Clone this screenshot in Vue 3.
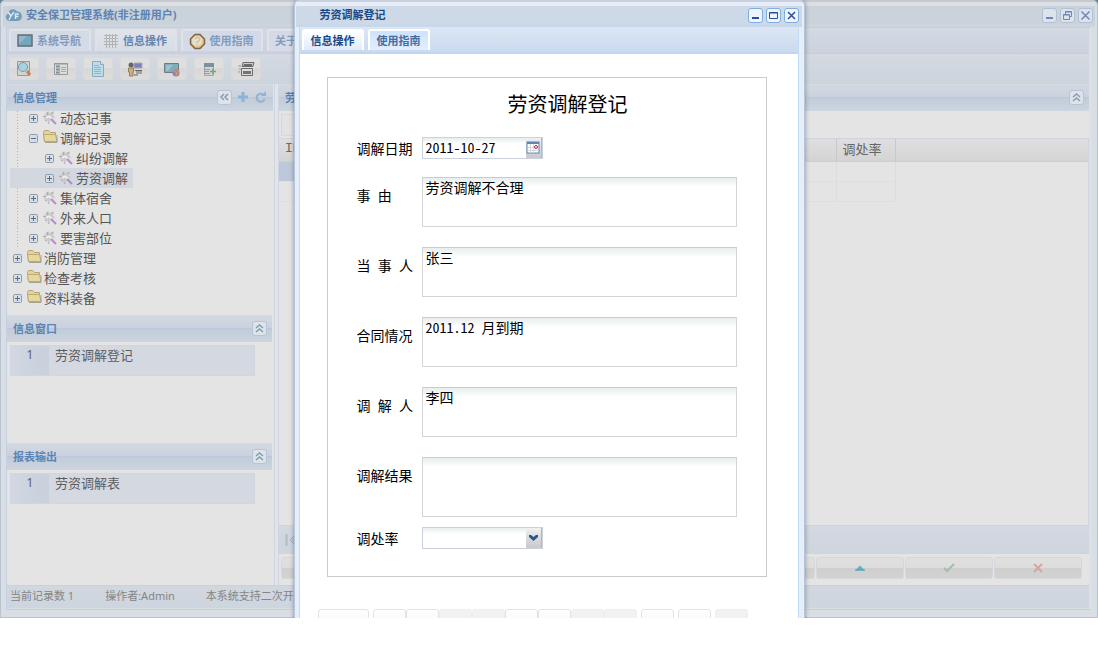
<script setup>
import { ref } from 'vue'

const navTabs = [
  { label: '系统导航', icon: 'screen' },
  { label: '信息操作', icon: 'grid', active: true },
  { label: '使用指南', icon: 'help' },
  { label: '关于' }
]
const tools = ['查找', '列表', '文档', '用户', '网络', '导入', '打印']

const tree = [
  { label: '动态记事', level: 1, leaf: true },
  { label: '调解记录', level: 1, open: true },
  { label: '纠纷调解', level: 2, leaf: true },
  { label: '劳资调解', level: 2, leaf: true, selected: true },
  { label: '集体宿舍', level: 1, leaf: true },
  { label: '外来人口', level: 1, leaf: true },
  { label: '要害部位', level: 1, leaf: true },
  { label: '消防管理', level: 0 },
  { label: '检查考核', level: 0 },
  { label: '资料装备', level: 0 }
]

const lists = [
  { title: '信息窗口', item: '劳资调解登记', cls: 'mid' },
  { title: '报表输出', item: '劳资调解表', cls: 'last' }
]

const date = ref('2011-10-27')
const rate = ref('')
const fields = ref([
  { id: 'reason', label: '事\u00a0\u00a0由', value: '劳资调解不合理' },
  { id: 'party', label: '当\u00a0\u00a0事\u00a0\u00a0人', value: '张三' },
  { id: 'contract', label: '合同情况', value: '2011.12 月到期' },
  { id: 'mediator', label: '调\u00a0\u00a0解\u00a0\u00a0人', value: '李四' },
  { id: 'result', label: '调解结果', value: '', tall: true }
])
const footer = ['wide', 'start', '', 'off', 'off', '', '', 'off', 'off', 'start', 'start', 'start off']
</script>

<template>
  <div class="desktop">
    <main class="app-window">
      <header class="titlebar">
        <svg class="logo" width="17" height="14" viewBox="0 0 17 14" aria-hidden="true">
          <path d="M4 13a4 4 0 0 1-1-7.500A5 5 0 0 1 12 3.500 4.800 4.800 0 0 1 13 13z" fill="#6f9dbb" />
          <path d="M3 4l3 4 3-4M6 8l-2 4M14 6h-3.500v5M10.500 8.500h3" fill="none" stroke="#dde6ec" stroke-width="1.500" />
        </svg>
        <h1>安全保卫管理系统(非注册用户)</h1>
        <div class="win-tools">
          <button type="button" aria-label="最小化"><svg width="13" height="13"><path d="M3 9h7" stroke="#7186b6" stroke-width="2" /></svg></button>
          <button type="button" aria-label="还原"><svg width="13" height="13" fill="none" stroke="#7186b6"><path d="M4.500 5V2.500h6v5H9M4 3h7M2.500 5.500h6v5h-6zM2 6h7" /></svg></button>
          <button type="button" aria-label="关闭"><svg width="13" height="13"><path d="M2.500 2.500l8 8M10.500 2.500l-8 8" stroke="#7186b6" stroke-width="1.500" /></svg></button>
        </div>
      </header>

      <div class="app-inner">
        <nav class="tabs">
          <button v-for="t in navTabs" :key="t.label" type="button" :class="['tab', { active: t.active, plain: !t.icon }]">
            <svg v-if="t.icon === 'screen'" width="16" height="14"><rect x="1" y="1" width="14" height="11" fill="#75a6c0" stroke="#666c72" stroke-width="1.500" /><path d="M2 2h8L2 10z" fill="#8fb8cc" /></svg>
            <svg v-else-if="t.icon === 'grid'" width="16" height="16"><path d="M1 2.500h14M1 5.500h14M1 8.500h14M1 11.500h14M3.500 1v14M6.500 1v14M9.500 1v14M12.500 1v14" stroke="#b3b3b3" stroke-width="1" /></svg>
            <svg v-else-if="t.icon === 'help'" width="17" height="17"><path d="M6 1.500h5L15.500 6v5L11 15.500H6L1.500 11V6z" fill="#e0c68a" stroke="#7c6748" stroke-width="1.500" /><circle cx="8" cy="8" r="5" fill="#e5e0d3" /><path d="M6 6q2-3 4-1t-2 4v1M8 11v1" fill="none" stroke="#d6c096" stroke-width="1.500" /></svg>
            <span>{{ t.label }}</span>
          </button>
        </nav>

        <div class="toolbar">
          <button v-for="(t, i) in tools" :key="t" type="button" :aria-label="t">
            <svg width="18" height="18" viewBox="0 0 18 18" fill="none">
              <template v-if="i === 0"><path d="M2.500 1.500h12v14h-12z" fill="#d2d2d2" stroke="#9a9a9a" /><circle cx="8" cy="7" r="4.500" fill="#a5d3df" stroke="#8698a2" /><path d="M12 11l3 4" stroke="#cb8058" stroke-width="3" /></template>
              <template v-else-if="i === 1"><path d="M2.500 3.500h13v11h-13z" fill="#dddddd" stroke="#999" /><path d="M2 4h14" stroke="#959595" /><path d="M4 6.500h3M4 9.500h3M4 12.500h3" stroke="#78929e" stroke-width="2" /><path d="M7.500 5v9" stroke="#aaa" /><path d="M9 7.500h5M9 9.500h5M9 11.500h5" stroke="#a8a8a8" /></template>
              <template v-else-if="i === 2"><path d="M3.500 1.500h8l3 3v12h-11z" fill="#bcdcea" stroke="#83abc3" /><path d="M11.500 1.500v3h3" fill="#e2ebee" stroke="#83abc3" /><path d="M5 5.500h5M5 7.500h7M5 9.500h7M5 11.500h7M5 13.500h7" stroke="#8db6ce" /></template>
              <template v-else-if="i === 3"><path d="M8 3h8v5H8z" fill="#7f7ec0" stroke="#aaa" /><path d="M10 11h6v3h-6z" fill="#a3a3a3" /><circle cx="5" cy="5" r="2.500" fill="#666" /><path d="M2.500 8h5v4H7v4H3.500v-4h-1z" fill="#cbb27c" stroke="#937f5c" /><path d="M9 10.500h7M8 15h4" stroke="#666" /></template>
              <template v-else-if="i === 4"><path d="M1.500 3.500h14v9h-14z" fill="#82abbc" stroke="#707a80" /><path d="M3 5h7l-5 6H3z" fill="#9bc2cf" /><circle cx="13" cy="13" r="3.500" fill="#9d80ae" /><path d="M11 11l3 2-1 3M14 10l2 2" stroke="#cf9c58" stroke-width="1.500" /></template>
              <template v-else-if="i === 5"><path d="M4.500 3.500h9v12h-9z" fill="#d5d5d5" stroke="#a5a5a5" /><path d="M4 3h10v4H4z" fill="#7b909e" /><path d="M4 9.500h6M4 11.500h5M4 13.500h6" stroke="#999" /><path d="M10 11.500h6M13 8.500v6" stroke="#6fa579" stroke-width="1.500" /></template>
              <template v-else><path d="M6 2.500h11l-1 4H5z" fill="#ccc" stroke="#6c6c6c" /><path d="M7 4h8v3H6z" fill="#6a6a6a" /><path d="M4.500 8.500h11v7h-11z" fill="#dcdcdc" stroke="#6c6c6c" /><path d="M6 11h8v3H6z" fill="#737373" /><path d="M1 6h3M2 9h2M1 12h2" stroke="#999" /></template>
            </svg>
          </button>
        </div>

        <div class="columns">
          <aside class="sidebar">
            <div class="panel-head">
              <h2>信息管理</h2>
              <button type="button" class="box-btn" aria-label="收起"><svg width="13" height="13"><path d="M6 3L3 6l3 3M10 3L7 6l3 3" fill="none" stroke="#7f9eb6" stroke-width="1.500" /></svg></button>
              <button type="button" class="bare-btn" aria-label="添加"><svg width="12" height="12"><path d="M6 1v10M1 6h10" stroke="#90b2d4" stroke-width="3" /></svg></button>
              <button type="button" class="bare-btn" aria-label="刷新"><svg width="12" height="12"><path d="M9 4.500A4 4 0 1 0 9.500 8" fill="none" stroke="#90b2d4" stroke-width="2" /><path d="M6 5h5V0z" fill="#90b2d4" /></svg></button>
            </div>
            <ul class="tree">
              <li v-for="n in tree" :key="n.label" :class="['lv' + n.level, { selected: n.selected }]">
                <svg class="expander" width="9" height="9"><rect x=".5" y=".5" width="8" height="8" rx="1" fill="#d7dde3" stroke="#8b9caf" /><path :d="n.open ? 'M2 4.500h5' : 'M2 4.500h5M4.500 2v5'" stroke="#566c8d" /></svg>
                <svg v-if="n.leaf" width="16" height="16"><path d="M3 4l3-3 2 2 4-2-1 4 2 3-4 1-2 4-2-3-3-1z" fill="#cacaca" /><path d="M1 6l3 1M5 2l1 3M3 10l2 1M10 2l1 2M6 12l1 2" stroke="#a9a9a9" /><path d="M7 6l3 3M4 8l3-2" stroke="#ededed" stroke-width="2" /><path d="M9 9l5 5" stroke="#bb85d6" stroke-width="2" /></svg>
                <svg v-else width="16" height="16"><path d="M1.500 2.500l1-2h4l2 2h5v9h-11z" fill="#e2d398" stroke="#b9a470" /><path d="M2.500 11.500l-1-7h12l1.500 7z" fill="#e5d999" stroke="#bda978" /><path d="M3 12.500h12V5" fill="none" stroke="#a9a397" /></svg>
                <span>{{ n.label }}</span>
              </li>
            </ul>
            <section v-for="l in lists" :key="l.title" :class="['list-panel', l.cls]">
              <div class="panel-head">
                <h2>{{ l.title }}</h2>
                <button type="button" class="box-btn" aria-label="折叠"><svg width="13" height="13"><path d="M3 6l3.500-3L10 6M3 10l3.500-3 3.500 3" fill="none" stroke="#7f9eb6" stroke-width="1.500" /></svg></button>
              </div>
              <div class="list-row"><span class="num">1</span><span class="name">{{ l.item }}</span></div>
            </section>
          </aside>

          <section class="center">
            <div class="panel-head">
              <h2>劳资调解</h2>
              <button type="button" class="box-btn" aria-label="折叠"><svg width="13" height="13"><path d="M3 6l3.500-3L10 6M3 10l3.500-3 3.500 3" fill="none" stroke="#7f9eb6" stroke-width="1.500" /></svg></button>
            </div>
            <div class="filter"><input type="text" aria-label="筛选"></div>
            <div class="grid">
              <table>
                <colgroup><col class="c-mark"><col><col class="c-rate"><col class="c-rest"></colgroup>
                <thead><tr><th>ID</th><th></th><th>调处率</th><th></th></tr></thead>
                <tbody>
                  <tr><td class="hot"></td><td></td><td></td><td class="void"></td></tr>
                  <tr><td></td><td></td><td></td><td class="void"></td></tr>
                </tbody>
              </table>
            </div>
            <div class="pager">
              <button type="button" aria-label="首页"><svg width="12" height="14"><path d="M1.500 1v12" stroke="#b5bac1" stroke-width="2" /><path d="M10 2L5 7l5 5z" fill="#c5cad1" stroke="#adb3bb" /></svg></button>
            </div>
            <div class="actions">
              <button v-for="n in 9" :key="n" type="button" :aria-label="'操作' + n">
                <svg v-if="n === 7" width="12" height="8"><path d="M1 6.500l5-5 5 5z" fill="#5bb6c4" /><path d="M1 6h10" stroke="#5a9da8" /></svg>
                <svg v-else-if="n === 8" width="12" height="10"><path d="M1 5l3 3 7-7" fill="none" stroke="#a1bfaa" stroke-width="2" /></svg>
                <svg v-else-if="n === 9" width="10" height="10"><path d="M1 1l8 8M9 1L1 9" stroke="#d7a5a0" stroke-width="2" /></svg>
              </button>
            </div>
          </section>
        </div>

        <footer class="status"><span>当前记录数 1</span><span>操作者:Admin</span><span>本系统支持二次开发</span></footer>
      </div>
    </main>

    <div class="overlay">
      <section class="dialog" role="dialog" aria-labelledby="dialog-title">
        <header class="titlebar">
          <h1 id="dialog-title">劳资调解登记</h1>
          <div class="win-tools">
            <button type="button" aria-label="最小化"><svg width="13" height="13"><path d="M3 9h7" stroke="#2b4d9c" stroke-width="2" /></svg></button>
            <button type="button" aria-label="最大化"><svg width="13" height="13"><path d="M2.500 3.500h8v6h-8zM2 4h9" fill="none" stroke="#2b4d9c" /></svg></button>
            <button type="button" aria-label="关闭"><svg width="13" height="13"><path d="M3 3l7 7M10 3l-7 7" stroke="#2b4d9c" stroke-width="1.500" /></svg></button>
          </div>
        </header>
        <div class="dialog-body">
          <nav class="tabs">
            <button type="button" class="tab active"><span>信息操作</span></button>
            <button type="button" class="tab"><span>使用指南</span></button>
          </nav>
          <form class="sheet" @submit.prevent>
            <h2>劳资调解登记</h2>
            <div class="row short first">
              <label for="date">调解日期</label>
              <div class="combo">
                <input id="date" v-model="date" type="text">
                <button type="button" class="trigger" aria-label="选择日期"><svg width="14" height="14"><rect x="1" y="1" width="12" height="11" fill="#fff" stroke="#5b87b8" /><path d="M1 2h12" stroke="#5b87b8" stroke-width="2" /><path d="M2 6.500h10M2 9.500h10M4.500 3v9M7.500 3v9" stroke="#d5d9df" /><circle cx="10" cy="6" r="1.500" fill="#fff" stroke="#a8233c" /></svg></button>
              </div>
            </div>
            <div v-for="f in fields" :key="f.id" :class="['row', { tall: f.tall }]">
              <label :for="f.id">{{ f.label }}</label>
              <textarea :id="f.id" v-model="f.value"></textarea>
            </div>
            <div class="row short">
              <label for="rate">调处率</label>
              <div class="combo">
                <select id="rate" v-model="rate"><option value=""></option></select>
                <span class="trigger" aria-hidden="true"><svg width="11" height="8"><path d="M1 1h2l2.500 2L8 1h2v2L5.500 7 1 3z" fill="#2c5494" /></svg></span>
              </div>
            </div>
          </form>
          <div class="dialog-actions">
            <button v-for="(b, i) in footer" :key="i" type="button" :class="b" :aria-label="'按钮' + (i + 1)"></button>
          </div>
        </div>
      </section>
    </div>
  </div>
</template>

<style>
body { margin: 0; background: #fff; overflow: hidden; }
</style>

<style scoped>
* { box-sizing: border-box; }
.desktop {
  position: relative;
  font-family: "Noto Sans", "Noto Sans CJK SC", sans-serif;
  font-size: 11px;
  line-height: 16px;
  color: #666;
  background: #5f7f9c;
}
button { margin: 0; padding: 0; border: 0; background: none; font: inherit; color: inherit; }
h1, h2, ul { margin: 0; padding: 0; font: inherit; }
svg { display: block; flex: none; }

.app-window {
  padding: 0 5px 7px;
  border: 1px solid #b9c2cf;
  border-top: 2px solid #c6cad0;
  border-radius: 5px 5px 0 0;
  background: #d9dde4;
}
.titlebar { display: flex; align-items: center; }
.app-window > .titlebar {
  height: 25px;
  margin: 0 -3px;
  padding: 0 2px;
  border-top: 4px solid #dcdfe4;
  border-bottom: 3px solid #cdd4dd;
  background: #cad2da;
}
.titlebar h1 { flex: 1; font-weight: bold; color: #5b83b3; }
.logo { margin-right: 4px; }
.win-tools { display: flex; gap: 3px; }
.win-tools button {
  width: 15px;
  height: 15px;
  border: 1px solid #b0c0d8;
  border-radius: 3px;
  background: #dee3ea;
}

.app-inner { border: 1px solid #c4cfe1; border-right: 3px solid #dde0e5; background: #e4e4e4; }
.tabs {
  display: flex;
  align-items: flex-end;
  gap: 4px;
  height: 26px;
  padding: 2px 2px 2px;
  background: linear-gradient(#d3d9e1, #cbd2de);
  border-bottom: 1px solid #c3cee2;
}
.tab {
  display: flex;
  align-items: center;
  justify-content: center;
  gap: 4px;
  height: 22px;
  min-width: 82px;
  padding: 0 2px 0 0;
  border: 2px solid #dfe3e9;
  border-bottom: 0;
  border-radius: 3px 3px 0 0;
  background: linear-gradient(#d3dae6, #d5dbe8);
  font-weight: bold;
  color: #829bbd;
}
.tab.active { background: linear-gradient(#e0e3e8, #d7dce6); color: #6486b4; }
.tab.plain { min-width: 64px; justify-content: flex-start; padding-left: 6px; }

.toolbar {
  display: flex;
  gap: 7px;
  height: 30px;
  padding: 3px 2px;
  background: linear-gradient(#d4d9e2, #ccd4dc);
}
.toolbar button {
  display: flex;
  align-items: center;
  justify-content: center;
  width: 30px;
  height: 23px;
  border: 1px solid #dadada;
  border-radius: 3px;
  background: linear-gradient(#dfdfdf 50%, #d7d7d7 50%, #dddddd);
}

.columns { display: flex; gap: 3px; }
.sidebar { flex: 0 0 268px; padding-right: 1px; border-right: 1px solid #cdd4e2; display: flex; flex-direction: column; }
.center { flex: 1; min-width: 0; border-left: 1px solid #cdd4e2; display: flex; flex-direction: column; }
.panel-head {
  display: flex;
  align-items: center;
  gap: 4px;
  height: 27px;
  padding: 0 5px 2px 6px;
  border-top: 1px solid #d5dae5;
  background: linear-gradient(#d2d8e1, #cad2de 12px, #b9c7db 12px, #c2cddb 14px, #cdd5de);
}
.panel-head h2 { flex: 1; padding-top: 2px; font-weight: bold; color: #5b83b3; }
.box-btn { width: 15px; height: 15px; border: 1px solid #b5c5da; border-radius: 3px; background: #dfe3e8; }
.bare-btn { width: 14px; height: 12px; padding-left: 1px; }
.center .panel-head { padding-right: 5px; }

.tree { height: 204px; list-style: none; padding: 0 0 0 3px; }
.tree li {
  display: flex;
  align-items: center;
  width: max-content;
  height: 20px;
  line-height: 20px;
  font-size: 13px;
  color: #555;
}
.tree li:first-child { height: 17px; padding-bottom: 3px; line-height: 14px; }
.tree span { padding: 0 5px 0 2px; }
.tree .expander { margin: 0 4px 0 3px; }
.lv1, .lv2 { background: repeating-linear-gradient(#b3b3b3 0 1px, transparent 1px 3px) 7px 0 / 1px 100% no-repeat; }
.lv1 { padding-left: 16px; }
.lv2 { padding-left: 32px; }
.tree .selected { background: #d3d8e0; }

.list-panel .panel-head { margin-right: 1px; }
.mid { height: 128px; }
.last { height: 142px; }
.list-row {
  display: flex;
  height: 31px;
  margin: 3px 18px 0 3px;
  border: 1px solid #cfd5e2;
  background: #d4d8e0;
  line-height: 18px;
  font-size: 13px;
  color: #5e5e5e;
}
.num { width: 38px; text-align: center; font-size: 12px; background: linear-gradient(90deg, #d2d7e0, #c8d0dd); }
.name { padding-left: 6px; }

.filter { height: 27px; padding: 3px 2px; }
.filter input { display: block; width: 160px; height: 22px; border: 1px solid #d6d8db; background: #e2e2e2; }
.grid { flex: 1; border: 1px solid #cdd3df; border-left: 0; }
.grid table { width: 100%; table-layout: fixed; border-collapse: collapse; font-size: 13px; }
.c-mark { width: 60px; }
.c-rate { width: 59px; }
.c-rest { width: 193px; }
th {
  height: 22px;
  padding: 0 6px 2px;
  border-right: 1px solid #c9c9c9;
  border-bottom: 1px solid #cfcfcf;
  background: linear-gradient(#dfdfdf, #d4d4d4);
  font-weight: normal;
  text-align: left;
  line-height: 20px;
}
th:first-child { border-right: 0; font-family: "Liberation Mono", monospace; }
th:last-child { border-right: 0; }
td { height: 20px; padding: 0; border-right: 1px solid #dcdcdc; border-bottom: 1px solid #dfdfdf; }
td:first-child { border-right: 0; }
td.void { border: 0; }
td.hot { background: #bdc9da; }
.pager { display: flex; align-items: center; height: 28px; padding-left: 6px; background: linear-gradient(#d3d8e1, #cdd5de); }
.actions { display: flex; gap: 1px; height: 31px; padding: 3px 7px 6px 2px; }
.actions button {
  flex: 1;
  display: flex;
  align-items: center;
  justify-content: center;
  border: 1px solid #d6d7db;
  border-radius: 3px;
  background: linear-gradient(#e0e0e0, #dcdcdc 50%, #cfcfcf 50%, #d2d2d2);
}
.status {
  display: flex;
  align-items: center;
  gap: 31px;
  height: 24px;
  padding: 0 0 2px 3px;
  border-top: 1px solid #c9d1dc;
  background: linear-gradient(#d1d7df, #cdd5de);
  border-bottom: 1px solid #d9dde2;
  color: #858585;
}

.overlay { position: absolute; inset: 0; display: flex; justify-content: center; align-items: flex-start; overflow: hidden; }
.dialog {
  flex: 0 0 510px;
  padding: 0 5px 0 4px;
  border: 1px solid #b3c6dd;
  border-top: 2px solid #c8d2df;
  border-radius: 5px 5px 0 0;
  background: #e6eefa;
  box-shadow: 0 0 4px rgba(60, 60, 60, .5);
}
.dialog > .titlebar {
  height: 25px;
  margin: 0 -3px;
  padding: 0 3px 0 24px;
  border-top: 4px solid #e7eefa;
  border-bottom: 3px solid #c8d7ea;
  background: #cdd9e6;
}
.dialog .titlebar h1 { color: #15498b; }
.dialog .win-tools button { border-color: #7faee0; background: #eef5ff; }
.dialog-body { height: 640px; border-left: 1px solid #c3daf5; border-right: 1px solid #c3daf5; background: #fff; }
.dialog .tabs { height: 27px; padding: 0 2px 2px; gap: 4px; border-bottom: 2px solid #c0d7f3; background: linear-gradient(#dce7f5, #cbdaee); }
.dialog .tab { min-width: 62px; height: 21px; padding: 0; border-color: #fff; background: linear-gradient(#cfe2fc, #e2eeff); color: #416da3; }
.dialog .tab.active { background: linear-gradient(#fff, #dfebfb); color: #15498b; }
.sheet {
  margin: 23px 31px 0 27px;
  padding: 13px 29px 27px;
  border: 1px solid #cbcbcb;
  color: #000;
  font-size: 14px;
  line-height: 20px;
}
.sheet h2 { margin-bottom: 18px; font-size: 20px; line-height: 28px; text-align: center; padding-left: 42px; }
.row { display: flex; align-items: flex-start; margin-bottom: 20px; }
.row label { flex: 0 0 65px; padding-top: 9px; white-space: nowrap; }
.row.short label { padding-top: 2px; }
.row.short { margin-bottom: 0; }
.row.first { margin-bottom: 18px; }
.row.tall { margin-bottom: 10px; }
textarea {
  flex: 0 0 315px;
  height: 50px;
  margin: 0;
  padding: 0 3px;
  border: 1px solid #d3d6d8;
  border-top-color: #c8cccf;
  border-radius: 0;
  background: linear-gradient(#e8edee, #fff 9px);
  font-family: "Noto Sans Mono CJK SC", "Liberation Serif", "Noto Sans CJK SC", monospace;
  font-size: 14px;
  line-height: 18px;
  color: #000;
  resize: none;
  overflow: hidden;
}
.tall textarea { height: 60px; }
.combo { display: flex; width: 121px; height: 22px; border: 1px solid #ccd1e0; background: linear-gradient(#e8edee, #fff 6px); }
.combo input, .combo select {
  flex: 1;
  min-width: 0;
  padding: 0 3px 2px;
  border: 0;
  border-radius: 0;
  background: transparent;
  appearance: none;
  font-family: "Noto Sans Mono CJK SC", "Liberation Mono", monospace;
  font-size: 14px;
  color: #000;
}
.trigger {
  display: flex;
  align-items: center;
  justify-content: center;
  width: 16px;
  border-right: 1px solid #aeb6d4;
  background: linear-gradient(#f1f1f1, #dedede 40%, #c9c9c9);
}
.dialog-actions { display: flex; margin: 32px 0 0 18px; }
.dialog-actions button {
  width: 33px;
  height: 22px;
  border: 1px solid #e3e3e3;
  border-radius: 3px;
  background: linear-gradient(#fff, #f4f4f4);
}
.dialog-actions .wide { width: 51px; }
.dialog-actions .start { margin-left: 4px; }
.dialog-actions .off { border-color: #eee; background: #f2f2f2; }
</style>
